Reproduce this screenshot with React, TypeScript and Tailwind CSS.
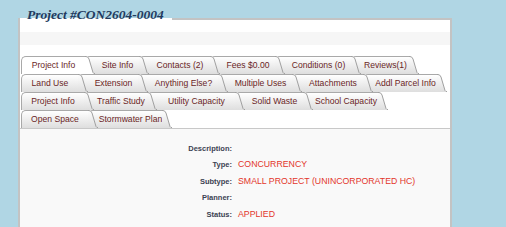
import React from 'react';

type TabDef = { label: string; w: number; active?: boolean };

// tab widths include the 10px slanted edge that slides under the next tab
const ROWS: TabDef[][] = [
  [
    { label: 'Project Info', w: 74, active: true },
    { label: 'Site Info', w: 64 },
    { label: 'Contacts (2)', w: 81 },
    { label: 'Fees $0.00', w: 75 },
    { label: 'Conditions (0)', w: 86 },
    { label: 'Reviews(1)', w: 68 },
  ],
  [
    { label: 'Land Use', w: 67 },
    { label: 'Extension', w: 70 },
    { label: 'Anything Else?', w: 90 },
    { label: 'Multiple Uses', w: 84 },
    { label: 'Attachments', w: 81 },
    { label: 'Addl Parcel Info', w: 84 },
  ],
  [
    { label: 'Project Info', w: 73 },
    { label: 'Traffic Study', w: 73 },
    { label: 'Utility Capacity', w: 98 },
    { label: 'Solid Waste', w: 78 },
    { label: 'School Capacity', w: 85 },
  ],
  [
    { label: 'Open Space', w: 77 },
    { label: 'Stormwater Plan', w: 84 },
  ],
];

const FIELDS = [
  { label: 'Description:', value: '' },
  { label: 'Type:', value: 'CONCURRENCY' },
  { label: 'Subtype:', value: 'SMALL PROJECT (UNINCORPORATED HC)' },
  { label: 'Planner:', value: '' },
  { label: 'Status:', value: 'APPLIED' },
];

const Tab = ({ tab, first, last, z }: { tab: TabDef; first: boolean; last: boolean; z: number }) => (
  <div
    className={`relative flex h-[18px] shrink-0 ${last ? '' : '-mr-[10px]'}`}
    style={{ width: tab.w, zIndex: z }}
  >
    <div
      className={`min-w-0 flex-1 flex items-center justify-center rounded-tl-[5px] border-t border-l border-[#a9a9a9] text-[8.6px] text-[#6a1f1f] whitespace-nowrap ${
        first ? '' : 'pl-[10px]'
      } ${tab.active ? 'bg-white' : 'bg-linear-to-b from-white to-[#dedede]'}`}
    >
      {tab.label}
    </div>
    <svg width="10" height="18" viewBox="0 0 10 18" className="shrink-0">
      <path
        d="M0 0 L1 0 Q3 0 4 3 L8 16.5 Q8.6 18 10 18 L0 18 Z"
        fill={tab.active ? '#ffffff' : 'url(#tabfill)'}
      />
      <path d="M0 0.5 L1 0.5 Q3 0.5 4 3 L8 16.5 Q8.6 17.6 10 17.6" fill="none" stroke="#a0a0a0" strokeWidth="1" />
    </svg>
  </div>
);

export default function App() {
  return (
    <div
      className="h-[227px] w-full overflow-hidden bg-[#b0d6e4] pl-[18px] pr-[54px] pt-[18px]"
      style={{ fontFamily: '"Liberation Sans", Arial, sans-serif' }}
    >
      <svg width="0" height="0" className="absolute">
        <defs>
          <linearGradient id="tabfill" x1="0" y1="0" x2="0" y2="1">
            <stop offset="0" stopColor="#ffffff" />
            <stop offset="1" stopColor="#dedede" />
          </linearGradient>
        </defs>
      </svg>

      <div className="relative flex h-full flex-col border-x-2 border-[#c3c3c3] bg-white">
        {/* top edge, broken under the title */}
        <div className="flex h-[2px]">
          <div className="w-[152px]" />
          <div className="flex-1 bg-[#c3c3c3]" />
        </div>
        <span
          className="absolute left-[7px] top-[-10px] text-[13.5px] font-bold italic leading-[14px] text-[#223a5e]"
          style={{ fontFamily: '"Liberation Serif", Georgia, serif' }}
        >
          Project #CON2604-0004
        </span>

        <div className="h-[12px]" />
        <div className="h-[13px] bg-[#f6f6f6]" />
        <div className="h-[11px]" />

        {/* tab rows */}
        <div className="flex flex-col pl-px">
          {ROWS.map((row, r) => (
            <div key={r} className="flex">
              {row.map((tab, i) => (
                <Tab
                  key={tab.label + i}
                  tab={tab}
                  first={i === 0}
                  last={i === row.length - 1}
                  z={row.length - i}
                />
              ))}
            </div>
          ))}
        </div>

        <div className="h-px bg-[#c8c8c8]" />

        <div className="flex-1 bg-[#f9f9f9] pt-[11px]">
          {FIELDS.map((f) => (
            <div key={f.label} className="flex h-[16.6px] items-center">
              <div className="w-[212px] text-right text-[7.5px] font-bold text-[#3b4252]">{f.label}</div>
              <div className="pl-[6px] text-[8.75px] text-[#e3352b]">{f.value}</div>
            </div>
          ))}
        </div>
      </div>
    </div>
  );
}
